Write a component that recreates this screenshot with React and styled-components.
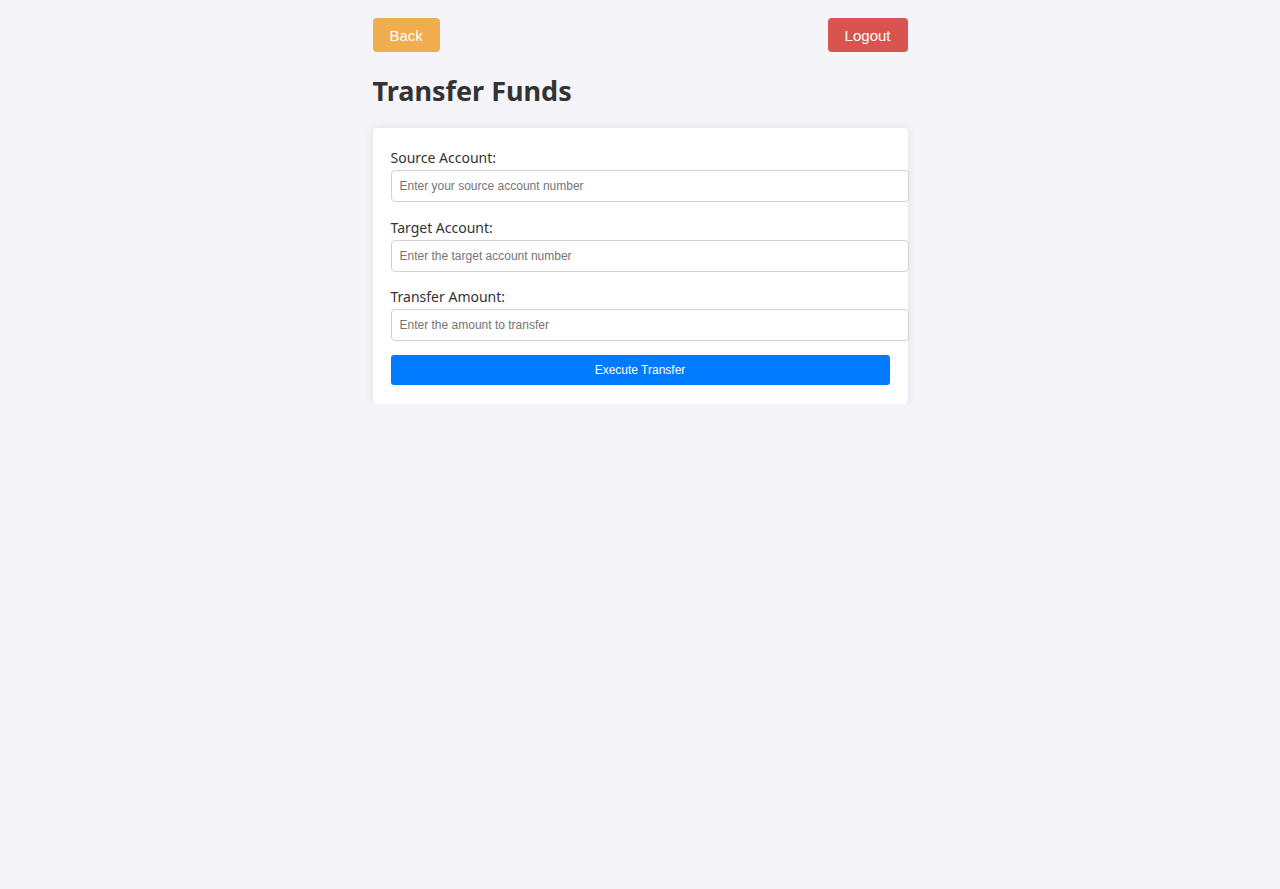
import React from 'react'
import styled, { createGlobalStyle } from 'styled-components'

const GlobalStyle = createGlobalStyle`
  body {
    margin: 0;
    background-color: #f4f4f9;
    color: #333;
    font-family: 'Noto Sans', 'Open Sans', sans-serif;
  }
`

const Container = styled.div`
  width: 535px;
  margin: 0 auto;
  padding-top: 18px;
`

const TopBar = styled.div`
  display: flex;
  justify-content: space-between;
  align-items: center;
`

const NavButton = styled.button`
  height: 34px;
  padding: 0 17px;
  border: none;
  border-radius: 4px;
  background-color: ${props => props.color};
  color: #fff;
  font-family: 'Liberation Sans', Arial, sans-serif;
  font-size: 15px;
  cursor: pointer;
`

const Title = styled.h2`
  font-size: 27px;
  font-weight: 700;
  line-height: 34px;
  margin: 22px 0 20px;
  color: #333;
`

const Card = styled.div`
  background-color: #fff;
  border-radius: 4px;
  box-shadow: 0 0 10px rgba(0, 0, 0, 0.1);
  padding: 18px 18px 19px;
`

const Label = styled.label`
  display: block;
  font-size: 14px;
  line-height: 20px;
  padding-top: 2px;
  margin-bottom: 2px;
`

const Input = styled.input`
  display: block;
  width: calc(100% + 19px);
  height: 32px;
  padding: 0 8px;
  margin-bottom: 13.5px;
  border: 1px solid #d2d2d2;
  border-radius: 4px;
  font-family: 'Liberation Sans', Arial, sans-serif;
  font-size: 12px;
  box-sizing: border-box;

  &::placeholder {
    color: #757575;
  }
`

const SubmitButton = styled.button`
  display: block;
  width: 100%;
  height: 30px;
  margin-top: 1px;
  border: none;
  border-radius: 3px;
  background-color: #007bff;
  color: #fff;
  font-family: 'Liberation Sans', Arial, sans-serif;
  font-size: 12px;
  cursor: pointer;
`

const fields = [
  { id: 'source', label: 'Source Account:', placeholder: 'Enter your source account number' },
  { id: 'target', label: 'Target Account:', placeholder: 'Enter the target account number' },
  { id: 'amount', label: 'Transfer Amount:', placeholder: 'Enter the amount to transfer' },
]

const App = () => {
  return (
    <>
      <GlobalStyle />
      <Container>
        <TopBar>
          <NavButton color="#f0ad4e">Back</NavButton>
          <NavButton color="#d9534f">Logout</NavButton>
        </TopBar>
        <Title>Transfer Funds</Title>
        <Card>
          {fields.map(f => (
            <div key={f.id}>
              <Label htmlFor={f.id}>{f.label}</Label>
              <Input id={f.id} type="text" placeholder={f.placeholder} />
            </div>
          ))}
          <SubmitButton type="button">Execute Transfer</SubmitButton>
        </Card>
      </Container>
    </>
  )
}

export default App
